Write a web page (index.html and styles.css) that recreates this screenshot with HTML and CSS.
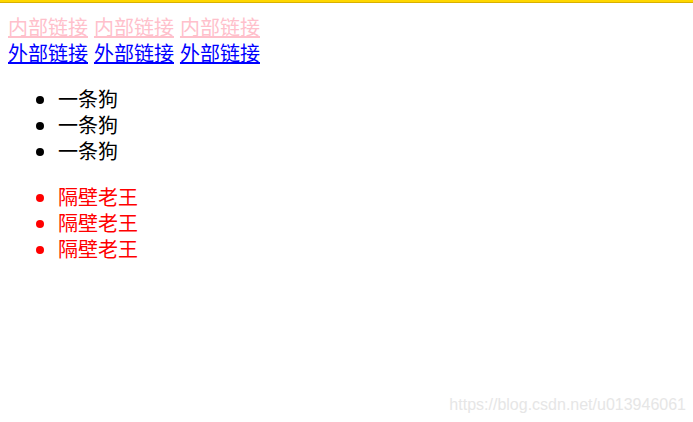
FILE: index.html
```html
<!DOCTYPE html>
<html lang="zh">
<head>
<meta charset="utf-8">
<link rel="stylesheet" href="styles.css">
</head>
<body>
<div class="topbar"></div>
<div class="page">
  <div class="links">
    <a class="inner" href="#">内部链接</a> <a class="inner" href="#">内部链接</a> <a class="inner" href="#">内部链接</a>
  </div>
  <div class="links">
    <a class="outer" href="#">外部链接</a> <a class="outer" href="#">外部链接</a> <a class="outer" href="#">外部链接</a>
  </div>
  <ul class="list">
    <li>一条狗</li>
    <li>一条狗</li>
    <li>一条狗</li>
  </ul>
  <ul class="list red">
    <li>隔壁老王</li>
    <li>隔壁老王</li>
    <li>隔壁老王</li>
  </ul>
</div>
<div class="watermark">https://blog.csdn.net/u013946061</div>
</body>
</html>
```
FILE: styles.css
```css
html, body {
  margin: 0;
  padding: 0;
  background: #ffffff;
}
body {
  font-family: "Noto Sans CJK SC", "Microsoft YaHei", sans-serif;
  font-size: 20px;
  line-height: 26px;
  color: #000000;
  height: 422px;
  position: relative;
  overflow: hidden;
}
.topbar {
  height: 2px;
  background: #ffd700;
  border-bottom: 1px solid #d9b000;
}
.page {
  padding: 11px 8px 0 8px;
}
.links {
  word-spacing: 1.5px;
}
.links a.inner {
  color: #ffc0cb;
}
.links a.outer {
  color: #0000ff;
}
.list {
  margin: 20px 0;
  padding-left: 50px;
}
.list.red {
  color: #ff0000;
}
.watermark {
  position: absolute;
  right: 7px;
  bottom: 8px;
  font-family: "Liberation Sans", Arial, sans-serif;
  font-size: 16px;
  line-height: 18px;
  color: #e6e6e6;
}
```
